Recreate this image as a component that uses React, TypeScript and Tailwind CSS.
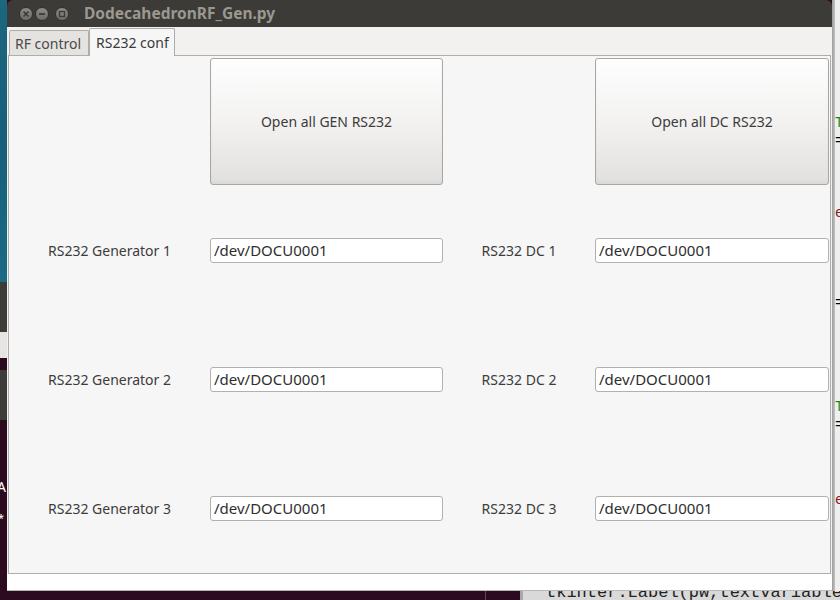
import React from "react";

const font = { fontFamily: '"Noto Sans", "Open Sans", sans-serif' };

function WinButton({ glyph, className = "" }: { glyph: "close" | "min" | "max"; className?: string }) {
  return (
    <div
      className={`w-[14px] h-[14px] rounded-full bg-gradient-to-b from-[#8e8c86] to-[#6e6c67] border border-[#34332f] flex items-center justify-center ${className}`}
    >
      <svg width="8" height="8" viewBox="0 0 8 8">
        {glyph === "close" && (
          <path d="M1.5 1.5 L6.5 6.5 M6.5 1.5 L1.5 6.5" stroke="#3c3b37" strokeWidth="1.6" />
        )}
        {glyph === "min" && <path d="M1 4 H7" stroke="#3c3b37" strokeWidth="1.8" />}
        {glyph === "max" && <rect x="1.5" y="1.5" width="5" height="5" fill="none" stroke="#3c3b37" strokeWidth="1.3" />}
      </svg>
    </div>
  );
}

function Field({ value }: { value: string }) {
  return (
    <div className="h-[25px] w-full bg-white border border-[#b3b1ae] rounded-[3px] flex items-center pl-[3px] text-[15px] text-[#2e2e2e]">
      {value}
    </div>
  );
}

function Label({ text }: { text: string }) {
  return <div className="flex items-center justify-center text-[14px] text-[#3c3c3c]">{text}</div>;
}

function BigButton({ text }: { text: string }) {
  return (
    <div className="h-[127px] rounded-[3px] border border-[#a9a7a4] bg-gradient-to-b from-[#fefefe] via-[#f3f2f1] to-[#e1e0de] shadow-[inset_0_-2px_3px_rgba(0,0,0,0.04)] flex items-center justify-center text-[14px] text-[#3c3c3c]">
      {text}
    </div>
  );
}

export default function App() {
  const rows = [1, 2, 3];
  return (
    <div className="w-[840px] h-[600px] overflow-hidden flex flex-col bg-[#2c0a1f]" style={font}>
      <div className="h-[591px] flex flex-row">
        {/* desktop, left */}
        <div className="w-[7px] flex flex-col">
          <div className="h-[282px] bg-gradient-to-b from-[#1d6680] via-[#176079] to-[#1a6b84]" />
          <div className="h-[50px] bg-[#3d3c38]" />
          <div className="h-[26px] bg-[#e6e5e3]" />
          <div className="h-[12px] bg-[#2c0a1f]" />
          <div className="h-[50px] bg-[#3d3c38]" />
          <div className="flex-1 bg-[#2c0a1f] text-white text-[14px] leading-none pt-[60px] overflow-hidden">
            <div className="-ml-[3px]">A</div>
            <div className="-ml-[2px] mt-[18px] text-[11px]">*</div>
          </div>
        </div>

        {/* window */}
        <div className="w-[825px] flex flex-col">
          <div className="h-[27px] bg-[#3c3b37] rounded-t-[6px] flex items-center">
            <WinButton glyph="close" className="ml-[12px]" />
            <WinButton glyph="min" className="ml-[2px]" />
            <WinButton glyph="max" className="ml-[6px]" />
            <div className="ml-[15px] text-[15.5px] font-bold text-[#9b9891]">DodecahedronRF_Gen.py</div>
          </div>
          <div className="flex-1 flex flex-col bg-[#f2f1f0]">
            <div className="h-[28px] flex items-end pl-[2px]">
              <div className="h-[25px] w-[80px] bg-[#e5e3e0] border border-b-0 border-[#aeaca9] rounded-t-[2px] flex items-center pl-[5px] text-[14px] text-[#4a4a4a]">
                RF control
              </div>
              <div className="h-[28px] w-[86px] -mb-[1px] relative z-10 bg-[#f6f6f6] border border-b-0 border-[#aeaca9] rounded-t-[2px] flex items-center pl-[6px] text-[14px] text-[#3a3a3a]">
                RS232 conf
              </div>
            </div>
            <div className="h-[519px] ml-[1px] mr-[1px] border border-[#b0aeab] bg-[#f6f6f6] pt-[2px]">
              <div className="grid grid-cols-[201px_233px_152px_234px] grid-rows-[127px_1px_129px_129px_129px]">
                <div />
                <BigButton text="Open all GEN RS232" />
                <div />
                <BigButton text="Open all DC RS232" />
                <div className="col-span-4" />
                {rows.map((n) => (
                  <React.Fragment key={n}>
                    <Label text={`RS232 Generator ${n}`} />
                    <div className="flex items-center">
                      <Field value="/dev/DOCU0001" />
                    </div>
                    <Label text={`RS232 DC ${n}`} />
                    <div className="flex items-center">
                      <Field value="/dev/DOCU0001" />
                    </div>
                  </React.Fragment>
                ))}
              </div>
            </div>
            <div className="flex-1 bg-white border-b border-[#b8b8b8]" />
          </div>
        </div>

        {/* desktop, right */}
        <div className="w-[8px] flex flex-row">
          <div className="w-[3px] bg-gradient-to-r from-[#9c9c9c] to-[#c4c4c4]" />
          <div
            className="flex-1 bg-[#efefef] flex flex-col text-[14px] leading-none overflow-hidden"
            style={{ fontFamily: '"Liberation Mono", monospace' }}
          >
            <div className="h-[116px]" />
            <div className="text-[#1a8a1a] h-[18px]">T</div>
            <div className="text-black h-[72px]">=</div>
            <div className="text-[#8b1a1a] h-[90px]">e</div>
            <div className="text-black h-[104px]">=</div>
            <div className="text-[#1a8a1a] h-[18px]">T</div>
            <div className="text-black h-[75px]">=</div>
            <div className="text-[#8b1a1a]">e</div>
          </div>
        </div>
      </div>

      {/* desktop, bottom */}
      <div className="h-[9px] flex flex-row">
        <div className="w-[485px] bg-[#2c0a1f]" />
        <div className="w-[1px] bg-[#5a4a55]" />
        <div className="w-[34px] bg-[#2c0a1f]" />
        <div className="w-[3px] bg-[#a8a8a8]" />
        <div className="flex-1 bg-[#d9d9d9] overflow-hidden pl-[23px]">
          <div
            className="text-[17px] leading-none -mt-[7px] text-[#222] whitespace-nowrap"
            style={{ fontFamily: '"Liberation Mono", monospace' }}
          >
            tkinter.Label(pw,textvariable=
          </div>
        </div>
      </div>
    </div>
  );
}
